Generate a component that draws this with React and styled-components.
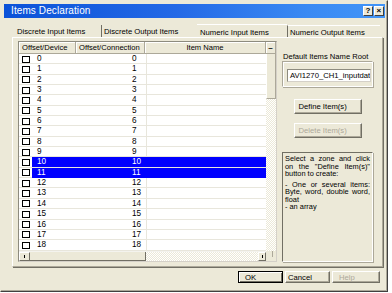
import React from 'react';
import styled, { createGlobalStyle } from 'styled-components';

const Global = createGlobalStyle`
  html, body { margin: 0; padding: 0; background: #ffffff; }
  body { font-family: "Liberation Sans", Arial, sans-serif; }
  * { box-sizing: border-box; }
`;

const BEIGE = '#ece9d8';
const SHADOW = '#aca899';
const DARK = '#716f64';
const GRID = '#e8e6dc';

const Window = styled.div`
  width: 388px;
  height: 292px;
  background: ${BEIGE};
  border: 1px solid;
  border-color: ${BEIGE} #404040 #404040 ${BEIGE};
  box-shadow: inset -1px -1px 0 ${SHADOW};
  padding: 3px 2px 0 3px;
  display: flex;
  flex-direction: column;
`;

const TitleBar = styled.div`
  height: 14px;
  display: flex;
  align-items: center;
  padding: 0 1px 0 7px;
  background: linear-gradient(to right, #0b52d8 0%, #2469e6 45%, #3a8af3 80%, #4195f8 100%);
  color: #ffffff;
  font-size: 10px;
  letter-spacing: 0.1px;
`;

const TitleText = styled.span`
  flex: 1;
  line-height: 14px;
`;

const TitleButtons = styled.div`
  display: flex;
  gap: 1px;
`;

const TitleButton = styled.div`
  width: 10px;
  height: 10px;
  background: ${BEIGE};
  border: 1px solid;
  border-color: #fff #404040 #404040 #fff;
  color: #000;
  font-size: 8px;
  font-weight: bold;
  line-height: 8px;
  display: flex;
  align-items: center;
  justify-content: center;
`;

const TabStrip = styled.div`
  margin: 3px 0 0 8px;
  height: 16px;
  display: flex;
  align-items: flex-end;
`;

const Tab = styled.div`
  width: ${(p) => p.$w}px;
  height: ${(p) => (p.$selected ? 13 : 12)}px;
  padding-left: ${(p) => p.$pad}px;
  font-size: 7.7px;
  color: #000;
  display: flex;
  align-items: center;
  padding-top: ${(p) => (p.$selected ? 2 : 1)}px;
  border-left: ${(p) => (p.$sep ? `1px solid ${DARK}` : 'none')};
  border-top: ${(p) => (p.$top ? '1px solid #ffffff' : 'none')};
  white-space: nowrap;
`;

const Panel = styled.div`
  margin-left: 8px;
  width: 371px;
  height: 230px;
  border: 1px solid;
  border-color: #ffffff ${SHADOW} ${SHADOW} #ffffff;
  box-shadow: 1px 1px 0 ${DARK};
  padding: 3px 0 0 5px;
  display: flex;
  gap: 5px;
`;

const ListBox = styled.div`
  width: 259px;
  height: 221px;
  border: 1px solid;
  border-color: #8d8b7f #d4d0c8 #d4d0c8 #8d8b7f;
  background: #ffffff;
  display: grid;
  grid-template-columns: 247px 10px;
  grid-template-rows: 12px 197px 10px;
`;

const Header = styled.div`
  display: grid;
  grid-template-columns: 57px 69px 121px;
`;

const HeaderCell = styled.div`
  background: ${BEIGE};
  border-right: 1px solid ${SHADOW};
  border-bottom: 1px solid ${SHADOW};
  box-shadow: inset 1px 1px 0 #ffffff;
  font-size: 7.6px;
  color: #000;
  display: flex;
  align-items: center;
  justify-content: ${(p) => (p.$center ? 'center' : 'flex-start')};
  padding-left: ${(p) => (p.$center ? 0 : 3)}px;
  white-space: nowrap;
  overflow: hidden;
`;

const MinusCell = styled(HeaderCell)`
  justify-content: center;
  padding-left: 0;
  font-size: 8px;
  font-weight: bold;
`;

const Body = styled.div`
  overflow: hidden;
`;

const Row = styled.div`
  height: 10.35px;
  display: grid;
  grid-template-columns: 13px 44px 70px 1fr;
  border-bottom: 1px solid ${GRID};
  font-size: 8.2px;
`;

const CheckCell = styled.div`
  display: flex;
  align-items: center;
  padding-left: 3px;
`;

const Check = styled.div`
  width: 8px;
  height: 7px;
  border: 1px solid #000;
  background: #fff;
`;

const Cell = styled.div`
  display: flex;
  align-items: center;
  padding-left: ${(p) => p.$pad}px;
  background: ${(p) => (p.$selected ? '#0000ff' : 'transparent')};
  color: ${(p) => (p.$selected ? '#ffffff' : '#000000')};
  border-left: ${(p) => (p.$line && !p.$selected ? `1px solid ${GRID}` : 'none')};
  line-height: 10px;
`;

const Checkered = styled.div`
  background-color: #ffffff;
  background-image: repeating-conic-gradient(${BEIGE} 0 25%, #ffffff 0 50%);
  background-size: 2px 2px;
`;

const VScroll = styled(Checkered)`
  display: flex;
  flex-direction: column;
`;

const VThumb = styled.div`
  height: 45px;
  background: ${BEIGE};
  border-left: 1px solid #ffffff;
  border-right: 1px solid ${SHADOW};
  border-bottom: 1px solid ${SHADOW};
`;

const HScroll = styled(Checkered)`
  display: flex;
  border-top: 1px solid #f4f3ee;
`;

const ArrowBox = styled.div`
  width: ${(p) => p.$w}px;
  background: ${BEIGE};
  border: 1px solid;
  border-color: #ffffff ${DARK} ${DARK} #ffffff;
  display: flex;
  align-items: center;
  justify-content: center;
`;

const Tick = styled.div`
  width: 1px;
  height: 3px;
  background: #000;
`;

const HThumb = styled.div`
  width: 116px;
  background: ${BEIGE};
  border-right: 1px solid ${DARK};
  border-bottom: 1px solid ${DARK};
`;

const Track = styled(Checkered)`
  flex: 1;
`;

const Corner = styled.div`
  background: ${BEIGE};
  display: flex;
  justify-content: flex-end;
  padding-right: 3px;
`;

const CornerLine = styled.div`
  width: 1px;
  height: 6px;
  background: ${SHADOW};
`;

const Side = styled.div`
  width: 91px;
  display: flex;
  flex-direction: column;
`;

const Label = styled.div`
  margin-top: 12px;
  padding-left: 1px;
  font-size: 7.6px;
  line-height: 8px;
  white-space: nowrap;
  color: #000;
`;

const Frame = styled.div`
  height: 26px;
  border: 1px solid;
  border-color: ${SHADOW} #ffffff #ffffff ${SHADOW};
  box-shadow: inset 1px 1px 0 #ffffff, 1px 1px 0 ${SHADOW};
  padding: 7px 0 0 4px;
`;

const Input = styled.div`
  width: 84px;
  height: 13px;
  background: #ffffff;
  border: 1px solid;
  border-color: #8d8b7f #d4d0c8 #d4d0c8 #8d8b7f;
  font-size: 7.7px;
  line-height: 11px;
  padding-left: 2px;
  white-space: nowrap;
  overflow: hidden;
  color: #000;
`;

const Button = styled.div`
  width: ${(p) => p.$w}px;
  height: ${(p) => p.$h}px;
  background: ${BEIGE};
  border: 1px solid;
  border-color: ${(p) => (p.$default ? '#000 #000 #000 #000' : `#ffffff ${DARK} ${DARK} #ffffff`)};
  box-shadow: ${(p) => (p.$default ? `inset 1px 1px 0 #ffffff, inset -1px -1px 0 ${DARK}` : `inset -1px -1px 0 ${SHADOW}`)};
  color: ${(p) => (p.$disabled ? SHADOW : '#000')};
  font-size: 7.7px;
  display: flex;
  align-items: center;
  padding-left: ${(p) => p.$pad}px;
  white-space: nowrap;
`;

const SideButton = styled(Button)`
  align-self: center;
  margin-top: ${(p) => p.$mt}px;
`;

const InfoBox = styled.div`
  margin-top: 14px;
  height: 110px;
  border: 1px solid;
  border-color: ${DARK} #ffffff #ffffff ${DARK};
  box-shadow: 1px 1px 0 ${SHADOW};
  padding: 2px 2px 0 2px;
  font-size: 7.4px;
  line-height: 7.5px;
  color: #000;
`;

const InfoLine = styled.div`
  text-align: ${(p) => (p.$justify ? 'justify' : 'left')};
  text-align-last: ${(p) => (p.$justify ? 'justify' : 'left')};
  white-space: nowrap;
  margin-top: ${(p) => p.$mt || 0}px;
`;

const Footer = styled.div`
  margin-top: 4px;
  padding-right: 5px;
  display: flex;
  justify-content: flex-end;
  gap: 2px;
`;

const rows = Array.from({ length: 19 }, (_, i) => i);
const selected = new Set([10, 11]);

export default function App() {
  return (
    <>
      <Global />
      <Window>
        <TitleBar>
          <TitleText>Items Declaration</TitleText>
          <TitleButtons>
            <TitleButton>?</TitleButton>
            <TitleButton>×</TitleButton>
          </TitleButtons>
        </TitleBar>
        <TabStrip>
          <Tab $w={89} $pad={5}>Discrete Input Items</Tab>
          <Tab $w={96} $pad={2} $sep>Discrete Output Items</Tab>
          <Tab $w={90} $pad={3} $top $selected>Numeric Input Items</Tab>
          <Tab $w={93} $pad={2} $sep $top>Numeric Output Items</Tab>
        </TabStrip>
        <Panel>
          <ListBox>
            <Header>
              <HeaderCell>Offset/Device</HeaderCell>
              <HeaderCell>Offset/Connection</HeaderCell>
              <HeaderCell $center>Item Name</HeaderCell>
            </Header>
            <MinusCell>–</MinusCell>
            <Body>
              {rows.map((i) => {
                const s = selected.has(i);
                return (
                  <Row key={i}>
                    <CheckCell>
                      <Check />
                    </CheckCell>
                    <Cell $pad={5} $selected={s}>{i}</Cell>
                    <Cell $pad={56} $selected={s}>{i}</Cell>
                    <Cell $pad={0} $selected={s} $line />
                  </Row>
                );
              })}
            </Body>
            <VScroll>
              <VThumb />
            </VScroll>
            <HScroll>
              <ArrowBox $w={11}>
                <Tick />
              </ArrowBox>
              <HThumb />
              <Track />
              <ArrowBox $w={8}>
                <Tick />
              </ArrowBox>
            </HScroll>
            <Corner>
              <CornerLine />
            </Corner>
          </ListBox>
          <Side>
            <Label>Default Items Name Root</Label>
            <Frame>
              <Input>AVI1270_CH1_inputdat</Input>
            </Frame>
            <SideButton $w={68} $h={15} $pad={4} $mt={12}>Define Item(s)</SideButton>
            <SideButton $w={68} $h={15} $pad={4} $mt={9} $disabled>Delete Item(s)</SideButton>
            <InfoBox>
              <InfoLine $justify>Select a zone and click</InfoLine>
              <InfoLine $justify>on the "Define Item(s)"</InfoLine>
              <InfoLine>button to create:</InfoLine>
              <InfoLine $justify $mt={3}>- One or several items:</InfoLine>
              <InfoLine $justify>Byte, word, double word,</InfoLine>
              <InfoLine>float</InfoLine>
              <InfoLine>- an array</InfoLine>
            </InfoBox>
          </Side>
        </Panel>
        <Footer>
          <Button $w={45} $h={12} $pad={6} $default>OK</Button>
          <Button $w={45} $h={12} $pad={2}>Cancel</Button>
          <Button $w={48} $h={12} $pad={6} $disabled>Help</Button>
        </Footer>
      </Window>
    </>
  );
}
